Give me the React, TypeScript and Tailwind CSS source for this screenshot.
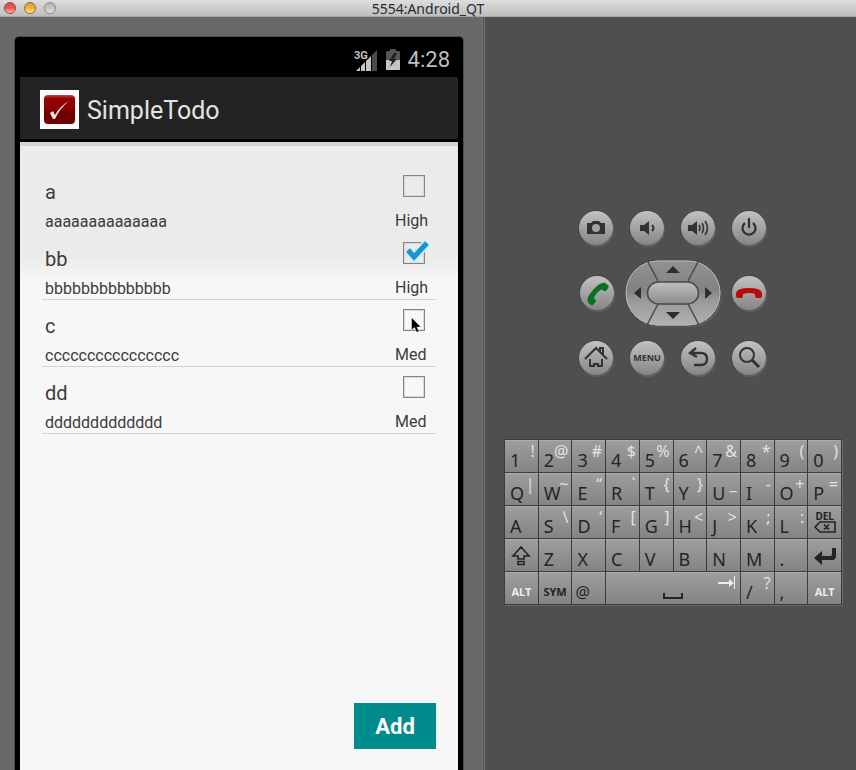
import { useState } from "react";
import type { ReactNode } from "react";

type Todo = { title: string; detail: string; priority: string; done: boolean };

const TODOS: Todo[] = [
  { title: "a", detail: "aaaaaaaaaaaaaa", priority: "High", done: false },
  { title: "bb", detail: "bbbbbbbbbbbbbb", priority: "High", done: true },
  { title: "c", detail: "cccccccccccccccc", priority: "Med", done: false },
  { title: "dd", detail: "ddddddddddddd", priority: "Med", done: false },
];

const KEYS: [string, string][][] = [
  [["1", "!"], ["2", "@"], ["3", "#"], ["4", "$"], ["5", "%"], ["6", "^"], ["7", "&"], ["8", "*"], ["9", "("], ["0", ")"]],
  [["Q", "|"], ["W", "~"], ["E", "“"], ["R", "`"], ["T", "{"], ["Y", "}"], ["U", "_"], ["I", "-"], ["O", "+"], ["P", "="]],
  [["A", ""], ["S", "\\"], ["D", "‘"], ["F", "["], ["G", "]"], ["H", "<"], ["J", ">"], ["K", ";"], ["L", ":"]],
  [["Z", ""], ["X", ""], ["C", ""], ["V", ""], ["B", ""], ["N", ""], ["M", ""], [".", ""]],
];

function TitleBar() {
  return (
    <header className="relative flex h-[17px] shrink-0 items-center border-b border-[#a9a9a9] bg-linear-to-b from-[#dedede] to-[#bdbdbd] px-1">
      <div className="flex gap-2">
        <button aria-label="Close" className="size-3 rounded-full border border-[#a04040] bg-linear-to-b from-[#e0504c] via-[#ee5550] to-[#ffb8b0]" />
        <button aria-label="Minimize" className="size-3 rounded-full border border-[#9a6a20] bg-linear-to-b from-[#dc9a38] via-[#f0b040] to-[#fff09a]" />
        <button aria-label="Zoom" className="size-3 rounded-full border border-[#8c8c8c] bg-linear-to-b from-[#b4b4b4] via-[#c4c4c4] to-[#e6e6e6]" />
      </div>
      <h1 className="absolute inset-x-0 top-0 text-center font-['Noto_Sans','Open_Sans',sans-serif] text-sm leading-[17px] text-[#2c2c2c]">
        5554:Android_QT
      </h1>
    </header>
  );
}

function StatusBar() {
  return (
    <div className="flex h-10 items-center justify-end gap-2 pr-2 pt-[6px] text-[#bebebe]">
      <svg width="24" height="23" viewBox="0 0 24 23" aria-hidden="true">
        <path d="M23 1V22H18V6Z" fill="#4a4a4a" />
        <path d="M2 22L6 18V22ZM7 17L11 13V22H7ZM12 12L17 7V22H12Z" fill="#c4c4c4" />
        <text x="0" y="10" fontSize="11" fontWeight="700" fill="#c4c4c4" stroke="#000" strokeWidth="2" paintOrder="stroke" fontFamily="Roboto, sans-serif">3G</text>
      </svg>
      <svg width="14" height="22" viewBox="0 0 14 22" aria-hidden="true">
        <path d="M4 0H10V2H13L14 3V11H0V3L1 2H4Z" fill="#555" />
        <path d="M0 11H14V21H0Z" fill="#c4c4c4" />
        <path d="M8 4L3 12H6L4 18L11 10H8L11 4Z" fill="#222" />
      </svg>
      <span className="text-[22px] leading-6">4:28</span>
    </div>
  );
}

function AppLogo() {
  return (
    <svg width="39" height="39" viewBox="0 0 39 39" aria-hidden="true">
      <defs>
        <linearGradient id="logo" x1="0" y1="0" x2="0" y2="1">
          <stop offset="0" stopColor="#b05050" />
          <stop offset="0.12" stopColor="#980000" />
          <stop offset="0.52" stopColor="#8a0000" />
          <stop offset="0.56" stopColor="#6c0000" />
          <stop offset="1" stopColor="#700000" />
        </linearGradient>
      </defs>
      <rect width="39" height="39" fill="#fafafa" />
      <rect x="4" y="5" width="31" height="29" rx="4" fill="url(#logo)" />
      <path d="M10 23L13 21L15 25Q20 16 29 11Q20 18 15 29H13Z" fill="#efe6e6" />
    </svg>
  );
}

function TodoRow({ todo, index, pointer }: { todo: Todo; index: number; pointer: boolean }) {
  const [done, setDone] = useState(todo.done);
  const id = "todo-" + index;
  return (
    <li className={"flex h-[67px] justify-between border-b pl-[3px] " + (index === 0 ? "border-transparent" : "border-[#d4d4d4]")}>
      <div className="flex flex-col pt-[14px]">
        <label htmlFor={id} className="text-[20px] leading-6">{todo.title}</label>
        <span className="pt-[6px] text-base leading-6">{todo.detail}</span>
      </div>
      <div className="flex w-[41px] flex-col pt-[9px]">
        <div className="relative ml-2 size-6">
          <input
            id={id}
            type="checkbox"
            checked={done}
            onChange={() => setDone(!done)}
            className="block size-[22px] appearance-none border border-[#858585] shadow-[inset_0_0_0_1px_#d8d8d8]"
          />
          {done && (
            <svg className="pointer-events-none absolute -top-1 left-0" width="30" height="26" viewBox="0 0 30 26" aria-hidden="true">
              <path d="M5 13L11 19L24 5" fill="none" stroke="#cfe8f2" strokeWidth="9" strokeLinejoin="round" />
              <path d="M5 12L11 19L24 5" fill="none" stroke="#1497cb" strokeWidth="5" />
            </svg>
          )}
          {pointer && (
            <svg className="pointer-events-none absolute left-2 top-2" width="12" height="18" viewBox="0 0 12 18" aria-hidden="true">
              <path d="M0.5 0.5V13L3.5 10.5L5.5 15H8L6 10H10Z" fill="#000" stroke="#fff" strokeWidth="0.5" />
            </svg>
          )}
        </div>
        <span className="pt-3 text-base leading-6">{todo.priority}</span>
      </div>
    </li>
  );
}

function Phone() {
  return (
    <main className="flex flex-1 flex-col rounded-t-[4px] border-x-[5px] border-black bg-black font-[Roboto,sans-serif] text-[#3c3c3c] shadow-[0_0_0_1px_#4c4c4c]">
      <StatusBar />
      <div className="flex h-[62px] items-center gap-2 bg-[#232323] px-5 pt-[3px]">
        <AppLogo />
        <h2 className="pt-[2px] text-[25px] leading-8 text-[#e4e4e4]">SimpleTodo</h2>
      </div>
      <div className="mt-[3px] flex flex-1 flex-col border-t-4 border-[#d2d2d2] bg-linear-to-b from-[#ebebeb] from-[110px] to-[#f7f7f7] to-[136px] px-[22px] pb-[21px] pt-5">
        <ul>
          {TODOS.map((todo, i) => (
            <TodoRow key={todo.title} todo={todo} index={i} pointer={i === 2} />
          ))}
        </ul>
        <button className="mt-auto h-[46px] w-[82px] self-end bg-[#008c8c] text-[22px] font-bold text-white">Add</button>
      </div>
    </main>
  );
}

function RoundButton({ label, children }: { label: string; children: ReactNode }) {
  return (
    <button
      aria-label={label}
      className="flex size-[34px] items-center justify-center rounded-full bg-linear-to-b from-[#c2c2c2] to-[#858585] shadow-[1px_2px_0_#606060,0_0_0_1px_#484848]"
    >
      {children}
    </button>
  );
}

function Glyph({ children }: { children: ReactNode }) {
  return (
    <svg width="26" height="26" viewBox="0 0 26 26" fill="none" stroke="#333" strokeWidth="2" aria-hidden="true">
      {children}
    </svg>
  );
}

const HANDSET = "M0 16V13Q1 8 13 8Q25 8 26 13V16Q26 18 24 18H21Q19 18 19 16V14Q13 12 7 14V16Q7 18 5 18H2Q0 18 0 16Z";

function DPad() {
  return (
    <svg width="98" height="68" viewBox="0 0 98 68" role="img" aria-label="Direction pad">
      <defs>
        <linearGradient id="pad" x1="0" y1="0" x2="0" y2="1">
          <stop offset="0" stopColor="#929292" />
          <stop offset="0.45" stopColor="#828282" />
          <stop offset="0.6" stopColor="#989898" />
          <stop offset="1" stopColor="#b2b2b2" />
        </linearGradient>
        <linearGradient id="center" x1="0" y1="0" x2="0" y2="1">
          <stop offset="0" stopColor="#c0c0c0" />
          <stop offset="0.5" stopColor="#a6a6a6" />
          <stop offset="1" stopColor="#8c8c8c" />
        </linearGradient>
      </defs>
      <rect x="3" y="3" width="95" height="65" rx="32" fill="#666" />
      <rect x="1" y="1" width="96" height="66" rx="33" fill="url(#pad)" stroke="#454545" />
      <rect x="2" y="2" width="94" height="64" rx="32" fill="none" stroke="#b4b4b4" />
      <path d="M23 1L34 22M75 1L64 22M23 66L34 45M75 66L64 45" stroke="#4a4a4a" strokeWidth="1.5" />
      <rect x="23.5" y="23" width="51" height="22" rx="11" fill="url(#center)" stroke="#484848" strokeWidth="1.5" />
      <path d="M49 7L56 14H42ZM49 60L56 53H42ZM10 34L17 28V40ZM88 34L81 28V40Z" fill="#2e2e2e" />
    </svg>
  );
}

function Controls() {
  return (
    <section aria-label="Device controls" className="flex flex-col gap-[30px] pr-px">
      <div className="flex justify-center gap-[17px]">
        <RoundButton label="Camera">
          <Glyph>
            <path d="M4 8H8L10 6H16L18 8H22V19H4Z" fill="#333" stroke="none" />
            <circle cx="13" cy="13" r="4" fill="#a3a3a3" stroke="none" />
          </Glyph>
        </RoundButton>
        <RoundButton label="Volume down">
          <Glyph>
            <path d="M6 10H10L15 6V20L10 16H6Z" fill="#333" stroke="none" />
            <path d="M18 10Q21 13 18 16" />
          </Glyph>
        </RoundButton>
        <RoundButton label="Volume up">
          <Glyph>
            <path d="M3 10H7L12 6V20L7 16H3Z" fill="#333" stroke="none" />
            <path d="M14 10Q16 13 14 16M17 8Q20 13 17 18M20 6Q25 13 20 20" strokeWidth="1.6" />
          </Glyph>
        </RoundButton>
        <RoundButton label="Power">
          <Glyph>
            <path d="M9 8A6.5 6.5 0 1 0 17 8M13 3V13" strokeWidth="2.3" />
          </Glyph>
        </RoundButton>
      </div>
      <div className="-my-4 flex items-center justify-center gap-[10px]">
        <RoundButton label="Call">
          <Glyph>
            <path d={HANDSET} transform="rotate(-48 13 13)" fill="#087020" stroke="none" />
          </Glyph>
        </RoundButton>
        <DPad />
        <RoundButton label="End call">
          <Glyph>
            <path d={HANDSET} fill="#b80c0c" stroke="none" />
          </Glyph>
        </RoundButton>
      </div>
      <div className="flex justify-center gap-[17px]">
        <RoundButton label="Home">
          <Glyph>
            <path d="M2 14L13 3L24 14M17 7V3H20V10M7 14V21H11V19H15V21H19V14" />
          </Glyph>
        </RoundButton>
        <RoundButton label="Menu">
          <span className="font-['Noto_Sans',sans-serif] text-[9px] font-bold text-[#333]">MENU</span>
        </RoundButton>
        <RoundButton label="Back">
          <Glyph>
            <path d="M11 3L5 8L12 12M5 8H16Q22 8 22 14Q22 20 16 20H9" strokeWidth="2.3" />
          </Glyph>
        </RoundButton>
        <RoundButton label="Search">
          <Glyph>
            <circle cx="11" cy="10" r="7" />
            <path d="M16 15L23 22" strokeWidth="3" />
          </Glyph>
        </RoundButton>
      </div>
    </section>
  );
}

function Key({ label, wide, children }: { label: string; wide?: boolean; children: ReactNode }) {
  return (
    <button
      aria-label={label}
      className={
        "relative flex h-8 border-t border-[#adadad] bg-linear-to-b from-[#9d9d9d] to-[#848484] text-[#242424] " +
        (wide ? "col-span-4" : "")
      }
    >
      {children}
    </button>
  );
}

function CharKey({ main, alt }: { main: string; alt: string }) {
  return (
    <Key label={main}>
      <span className="pl-[5px] pt-[7px] text-lg leading-6">{main}</span>
      <span className="absolute right-[3px] top-0 text-base leading-5 text-[#e2e2e2]">{alt}</span>
    </Key>
  );
}

function Keyboard() {
  const chars = (row: [string, string][]) => row.map(([m, a]) => <CharKey key={m} main={m} alt={a} />);
  const word = "m-auto pt-[7px] text-[11px] leading-4 font-bold";
  return (
    <section
      aria-label="Keyboard"
      className="grid w-[338px] grid-cols-10 gap-px border border-[#3c3c3c] bg-[#3c3c3c] font-['Noto_Sans','Open_Sans',sans-serif] shadow-[1px_1px_0_#6a6a6a]"
    >
      {chars(KEYS[0])}
      {chars(KEYS[1])}
      {chars(KEYS[2])}
      <Key label="Delete">
        <span className="flex w-full flex-col items-center pt-1">
          <span className="text-[10px] font-bold leading-[10px]">DEL</span>
          <svg width="24" height="12" viewBox="0 0 24 12" fill="none" stroke="#242424" strokeWidth="1.6" aria-hidden="true">
            <path d="M2 6L7 1H22V11H7ZM11 3.500L16 8.500M16 3.500L11 8.500" />
          </svg>
        </span>
      </Key>
      <Key label="Shift">
        <svg className="m-auto" width="20" height="20" viewBox="0 0 20 20" fill="none" stroke="#242424" strokeWidth="1.6" aria-hidden="true">
          <path d="M10 1L18 10H13V13H7V10H2ZM7 15.500H13V18.500H7Z" />
        </svg>
      </Key>
      {chars(KEYS[3])}
      <Key label="Enter">
        <svg className="m-auto" width="24" height="18" viewBox="0 0 24 18" aria-hidden="true">
          <path d="M1 11L9 4V9H17Q19 9 19 7V1H23V9Q23 13 19 13H9V18Z" fill="#242424" />
        </svg>
      </Key>
      <Key label="Alt left"><span className={word + " text-[#ededed]"}>ALT</span></Key>
      <Key label="Symbols"><span className={word}>SYM</span></Key>
      <Key label="At"><span className="pl-[3px] pt-[7px] text-base leading-6">@</span></Key>
      <Key label="Space" wide>
        <svg className="mx-auto mt-[19px]" width="20" height="8" viewBox="0 0 20 8" fill="none" stroke="#242424" strokeWidth="2" aria-hidden="true">
          <path d="M1 1V6H19V1" />
        </svg>
        <svg className="absolute right-1 top-[3px]" width="18" height="13" viewBox="0 0 18 13" aria-hidden="true">
          <path d="M0 6H11V3L16 7L11 11V8H0ZM16 0H17V13H16Z" fill="#ededed" />
        </svg>
      </Key>
      <CharKey main="/" alt="?" />
      <CharKey main="," alt="" />
      <Key label="Alt right"><span className={word + " text-[#ededed]"}>ALT</span></Key>
    </section>
  );
}

export default function App() {
  return (
    <div className="flex min-h-screen flex-col bg-[#686868]">
      <TitleBar />
      <div className="flex flex-1">
        <div className="flex w-[482px] shrink-0 flex-col pl-[15px] pr-[19px] pt-5">
          <Phone />
        </div>
        <aside className="flex flex-1 flex-col items-center border-l-[3px] border-double border-[#727272] bg-[#504f50] pl-[5px] pt-[194px]">
          <Controls />
          <div className="mt-16">
            <Keyboard />
          </div>
        </aside>
      </div>
    </div>
  );
}
